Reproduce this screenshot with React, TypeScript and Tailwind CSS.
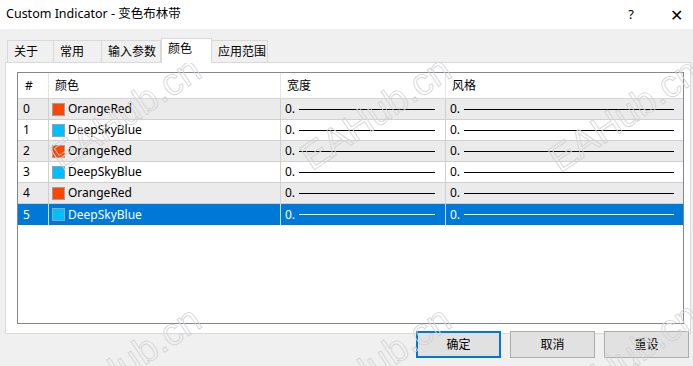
import React from "react";

const rows = [
  { name: "OrangeRed", color: "bg-[#ff4500]" },
  { name: "DeepSkyBlue", color: "bg-[#00bfff]" },
  { name: "OrangeRed", color: "bg-[#ff4500]" },
  { name: "DeepSkyBlue", color: "bg-[#00bfff]" },
  { name: "OrangeRed", color: "bg-[#ff4500]" },
  { name: "DeepSkyBlue", color: "bg-[#00bfff]" },
];

const tabs = ["关于", "常用", "输入参数", "颜色", "应用范围"];
const tabWidths = ["w-[47px]", "w-[48px]", "w-[59px]", "w-[51px]", "w-[56px]"];

// 水印位置（覆盖在内容之上）
const marks = [
  "left-[40px] top-[94px]",
  "left-[290px] top-[94px]",
  "left-[538px] top-[96px]",
  "left-[40px] top-[344px]",
  "left-[290px] top-[344px]",
  "left-[538px] top-[340px]",
];

export default function App() {
  return (
    <div className="relative h-[366px] w-[693px] overflow-hidden bg-[#f0f0f0] font-['Noto_Sans','Noto_Sans_CJK_SC',sans-serif] text-[12px] text-black">
      {/* 标题栏 */}
      <div className="flex h-[29px] items-center justify-between bg-white pl-[6px] pr-[10px]">
        <span className="text-[12.5px]">Custom Indicator - 变色布林带</span>
        <div className="flex items-center gap-[36px] text-[13px]">
          <span>?</span>
          <span className="text-[16px] font-light">✕</span>
        </div>
      </div>

      {/* 标签页 */}
      <div className="flex h-[33px] items-end pl-[7px]">
        {tabs.map((t, i) =>
          i === 3 ? (
            <div
              key={t}
              className={`relative z-10 -mb-px flex h-[25px] items-start border border-b-0 border-[#d9d9d9] bg-white pl-[6px] pt-[1px] ${tabWidths[i]}`}
            >
              {t}
            </div>
          ) : (
            <div
              key={t}
              className={`flex h-[22px] items-center border border-b-0 border-l-0 border-[#d9d9d9] pl-[6px] first:border-l ${tabWidths[i]}`}
            >
              {t}
            </div>
          )
        )}
      </div>

      {/* 面板 */}
      <div className="ml-[5px] h-[272px] w-[686px] border border-[#d9d9d9] bg-white pl-[11px] pt-[9px]">
        <div className="h-[252px] w-[667px] border border-[#828790] bg-white">
          <div className="grid h-[26px] grid-cols-[31px_232px_165px_1fr] border-b border-[#d5d5d5]">
            <div className="flex items-center border-r border-[#e5e5e5] pl-[7px]">#</div>
            <div className="flex items-center border-r border-[#e5e5e5] pl-[6px]">颜色</div>
            <div className="flex items-center border-r border-[#e5e5e5] pl-[6px]">宽度</div>
            <div className="flex items-center pl-[6px]">风格</div>
          </div>
          {rows.map((r, i) => {
            const selected = i === 5;
            const bg = selected ? "bg-[#0078d7] text-white" : i % 2 === 0 ? "bg-[#ebebeb]" : "bg-white";
            const sep = selected ? "border-[#c7ddf2]" : "border-[#d0d0d0]";
            const line = selected ? "bg-white" : "bg-black";
            return (
              <div
                key={i}
                className={`grid h-[21px] grid-cols-[31px_232px_165px_1fr] ${selected ? "" : "border-b border-[#d0d0d0]"} ${bg}`}
              >
                <div className={`flex items-center border-r pl-[5px] ${sep}`}>{i}</div>
                <div className={`flex items-center gap-[3px] border-r pl-[3px] ${sep}`}>
                  <span className={`h-[13px] w-[13px] border border-[#a0a0a0] ${r.color}`} />
                  <span>{r.name}</span>
                </div>
                <div className={`flex items-center border-r pl-[4px] pr-[10px] ${sep}`}>
                  <span className="w-[14px]">0.</span>
                  <span className={`h-px flex-1 ${line}`} />
                </div>
                <div className="flex items-center pl-[4px] pr-[9px]">
                  <span className="w-[14px]">0.</span>
                  <span className={`h-px flex-1 ${line}`} />
                </div>
              </div>
            );
          })}
        </div>
      </div>

      {/* 按钮 */}
      <div className="-mt-[3px] flex gap-[9px] pl-[416px]">
        <button className="h-[27px] w-[85px] border-2 border-[#0078d7] bg-[#e1e1e1]">确定</button>
        <button className="h-[27px] w-[85px] border border-[#adadad] bg-[#e1e1e1]">取消</button>
        <button className="h-[27px] w-[85px] border border-[#adadad] bg-[#e1e1e1]">重设</button>
      </div>

      {/* 水印 */}
      {marks.map((m, i) => (
        <span
          key={i}
          className={`pointer-events-none absolute ${m} origin-center -rotate-[34deg] font-['Liberation_Sans',sans-serif] text-[38px] leading-none text-transparent [-webkit-text-stroke:0.8px_#d2d2d2]`}
        >
          EAHub.cn
        </span>
      ))}
    </div>
  );
}
